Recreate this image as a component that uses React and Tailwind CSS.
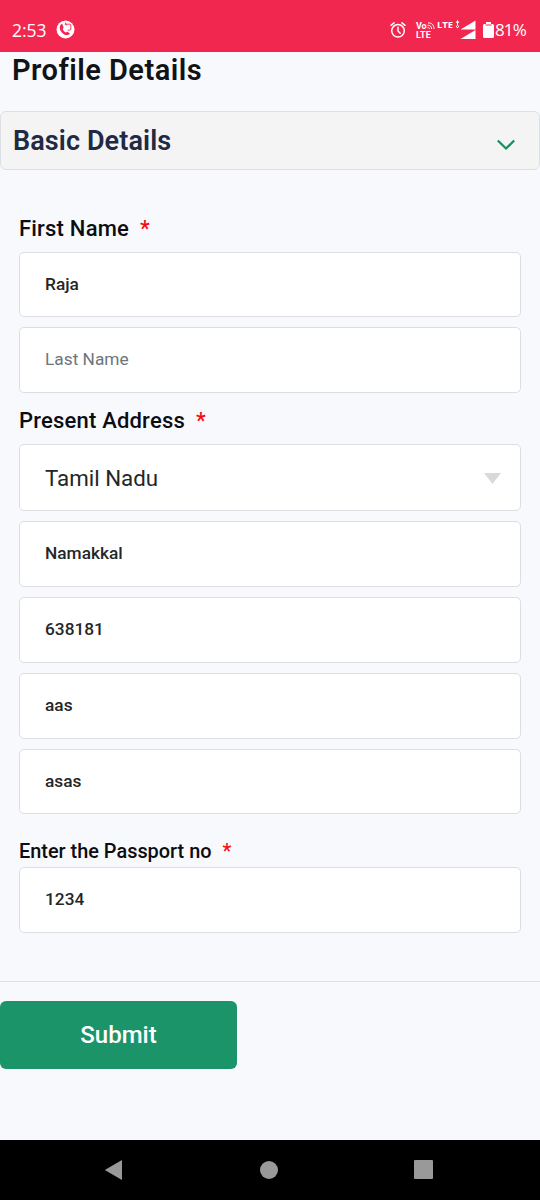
import React from "react";

const StatusBar = () => {
  return (
    <div className="h-[52px] bg-[#f2274f] text-white flex items-center pt-[8px] pl-3 pr-[14px] font-['Open_Sans',sans-serif]">
      <span className="w-[44px] text-[17.5px] leading-5">2:53</span>
      {/* Call recorder */}
      <svg width="19" height="19" viewBox="0 0 19 19" className="-mt-px">
        <circle cx="9.5" cy="9.5" r="9" fill="#fff" />
        <path d="M5 4.200C3 6.500 3.400 9.800 5.800 12.500s5.400 3.300 7.600 1.700l.3-1-2.300-1.500-1.600.8c-1.700-.8-2.500-1.900-3.100-3.400l1-1.500L6.300 4z" fill="#f2274f" />
        <path d="M8.700 4.200h5.100q1 0 1 1v4q0 1-1 1h-2M9.500 2.500l.8 3" fill="none" stroke="#f2274f" strokeWidth="0.9" />
      </svg>
      <div className="ml-auto flex items-center">
        {/* Alarm */}
        <svg width="16" height="18" viewBox="0 0 16 18" fill="none" stroke="#fff" strokeWidth="1.5" strokeLinecap="round">
          <circle cx="8" cy="9.800" r="6.300" />
          <path d="M8 6.300v3.700l2.200 2.200M1 4.300l3-2.500M15 4.300l-3-2.500" />
        </svg>
        {/* VoLTE */}
        <div className="ml-[10px] w-[21px] pt-px text-[9px] leading-[9px] font-bold font-[Roboto,sans-serif]">
          <div className="flex">
            <span>Vo</span>
            <svg width="8" height="8" viewBox="0 0 8 8" fill="none" stroke="#fff" strokeWidth="1">
              <path d="M1 1c3.500-.5 6 2 6 6M.6 3.200c2.300-.2 3.900 1.300 4 3.800M.5 5.300c1.100 0 1.800.7 1.900 1.700" />
            </svg>
          </div>
          <div className="tracking-[0.2px]">LTE</div>
        </div>
        {/* Network */}
        <div className="flex items-start h-[20px]">
          <span className="w-[18px] text-[9.500px] leading-[10px] font-bold">LTE</span>
          <svg width="38" height="20" viewBox="0 0 38 20" fill="#fff">
            <path d="M2.500 0l2 2.800h-4zM2.500 8.500l2-2.800h-4zM2 2h1v5H2zM5.500 9.500L20.500.5v9zM5.500 19L20.500 10v9z" />
          </svg>
        </div>
        {/* Battery */}
        <svg width="11" height="18" viewBox="0 0 11 18" fill="#fff" className="-ml-[10px]">
          <path d="M3 1h5v2H3zM0 4.500Q0 3 1.500 3h8Q11 3 11 4.500v11Q11 17 9.500 17h-8Q0 17 0 15.500z" />
          <path d="M2.500 3.500h6v1h-6z" fill="#f2274f" />
        </svg>
        <span className="ml-px text-[17px] leading-5 tracking-[-0.8px]">81%</span>
      </div>
    </div>
  );
};

const Label = ({ children, className }) => {
  return (
    <label className={"block font-[460] text-[#0c0d10] " + className}>
      {children}
      <span className="ml-[11px] text-[#f50a14]">*</span>
    </label>
  );
};

const Field = ({ value, placeholder, height = "h-[66px]" }) => {
  return (
    <input
      type="text"
      defaultValue={value}
      placeholder={placeholder}
      className={"block w-full rounded-[5px] border border-[#dcdee3] bg-white px-[25px] pb-[2px] text-[17.3px] font-[480] text-[#242628] outline-none placeholder:font-normal placeholder:text-[#6c757d] " + height}
    />
  );
};

const NavBar = () => {
  return (
    <div className="h-[60px] bg-black flex items-center justify-between pl-[104px] pr-[107px] pb-px">
      <svg width="19" height="22" viewBox="0 0 19 22" fill="#999">
        <path d="M18 1v20L.8 11z" />
      </svg>
      <div className="w-[18px] h-[18px] rounded-full bg-[#999]"></div>
      <div className="w-[19px] h-[19px] rounded-[1px] bg-[#999]"></div>
    </div>
  );
};

const App = () => {
  return (
    <div className="w-[540px] h-[1200px] flex flex-col overflow-hidden bg-[#f8f9fd] font-[Roboto,sans-serif]">
      <StatusBar />
      <div className="flex-1">
        <h1 className="pl-3 pt-px h-[59px] text-[29px] leading-[34px] tracking-[0.47px] font-semibold text-[#111315]">Profile Details</h1>
        <div className="h-[59px] rounded-[6px] border border-[#dcdfe3] bg-[#f4f4f4] flex items-center justify-between pl-3 pr-6">
          <h2 className="text-[27px] leading-8 tracking-[0.1px] font-semibold text-[#212945]">Basic Details</h2>
          <svg width="18" height="12" viewBox="0 0 18 12" fill="none" stroke="#15905f" strokeWidth="2.3" className="mt-2">
            <path d="M.8 1.500L9 9.500l8.200-8" />
          </svg>
        </div>
        <form className="px-[19px]">
          <Label className="pt-[45px] h-[82px] text-[22px] leading-7 tracking-[0.2px]">First Name</Label>
          <div className="flex flex-col gap-[10px]">
            <Field value="Raja" height="h-[65px]" />
            <Field placeholder="Last Name" />
          </div>
          <Label className="pt-[14px] h-[51px] text-[22px] leading-7 tracking-[0.2px]">Present Address</Label>
          <div className="flex flex-col gap-[10px]">
            <div className="h-[67px] rounded-[5px] border border-[#dcdee3] bg-white flex items-center justify-between pl-[25px] pr-[19px]">
              <span className="pt-[2px] text-[22.300px] text-[#242628]">Tamil Nadu</span>
              <svg width="17" height="11" viewBox="0 0 17 11" fill="#d9d9d9" className="mt-px">
                <path d="M0 0h17L8.500 11z" />
              </svg>
            </div>
            <Field value="Namakkal" />
            <Field value="638181" />
            <Field value="aas" />
            <Field value="asas" height="h-[65px]" />
          </div>
          <Label className="pt-[24px] h-[53px] text-[19.900px] leading-7">Enter the Passport no</Label>
          <Field value="1234" />
        </form>
        <div className="mt-12 border-t border-[#dcdfe4] pt-[19px]">
          <button className="w-[237px] h-[68px] rounded-[6px] bg-[#1c946a] text-white text-[24px] font-medium">Submit</button>
        </div>
      </div>
      <NavBar />
    </div>
  );
};

export default App;
